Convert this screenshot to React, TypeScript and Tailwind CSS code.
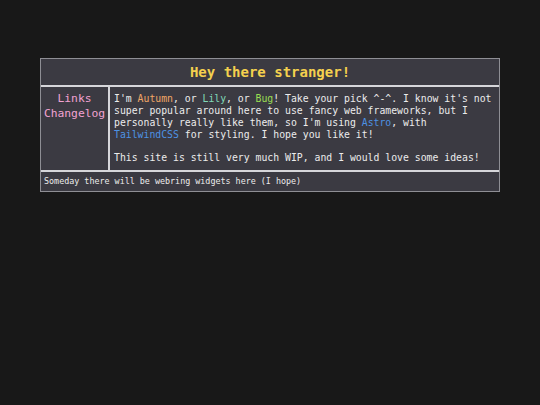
import React from "react";

export default function App() {
  const mono = { fontFamily: '"DejaVu Sans Mono", "Liberation Mono", monospace' };
  return (
    <div className="min-h-[405px] w-full bg-[#181818] pt-[58px]" style={mono}>
      <div className="mx-auto w-[460px] border border-[#8e8e94] bg-[#3b3a42] text-[#ececec]">
        <div className="flex h-[28px] items-center justify-center border-b-2 border-[#d6d6da] text-[14px] font-bold text-[#f4d04e]">
          Hey there stranger!
        </div>
        <div className="flex h-[85px] border-b-2 border-[#d6d6da]">
          <div className="flex w-[69px] shrink-0 flex-col items-center border-r-2 border-[#d6d6da] pt-[4px] text-[11.3px] leading-[15px] text-[#f2a2d2]">
            <span>Links</span>
            <span>Changelog</span>
          </div>
          <div className="flex-1 pl-[4px] pr-[6px] pt-[6px] text-[9.8px] leading-[12px]">
            <p>
              I'm <span className="text-[#f2a766]">Autumn</span>, or{" "}
              <span className="text-[#80d8b8]">Lily</span>, or{" "}
              <span className="text-[#9ade52]">Bug</span>! Take your pick ^-^. I know it's not super popular around here to use fancy web frameworks, but I personally really like them, so I'm using{" "}
              <span className="text-[#4d92e4]">Astro</span>, with{" "}
              <span className="text-[#4d92e4]">TailwindCSS</span> for styling. I hope you like it!
            </p>
            <p className="mt-[11px]">This site is still very much WIP, and I would love some ideas!</p>
          </div>
        </div>
        <div className="flex h-[19px] items-center pl-[3px] text-[8.4px]">
          Someday there will be webring widgets here (I hope)
        </div>
      </div>
    </div>
  );
}
